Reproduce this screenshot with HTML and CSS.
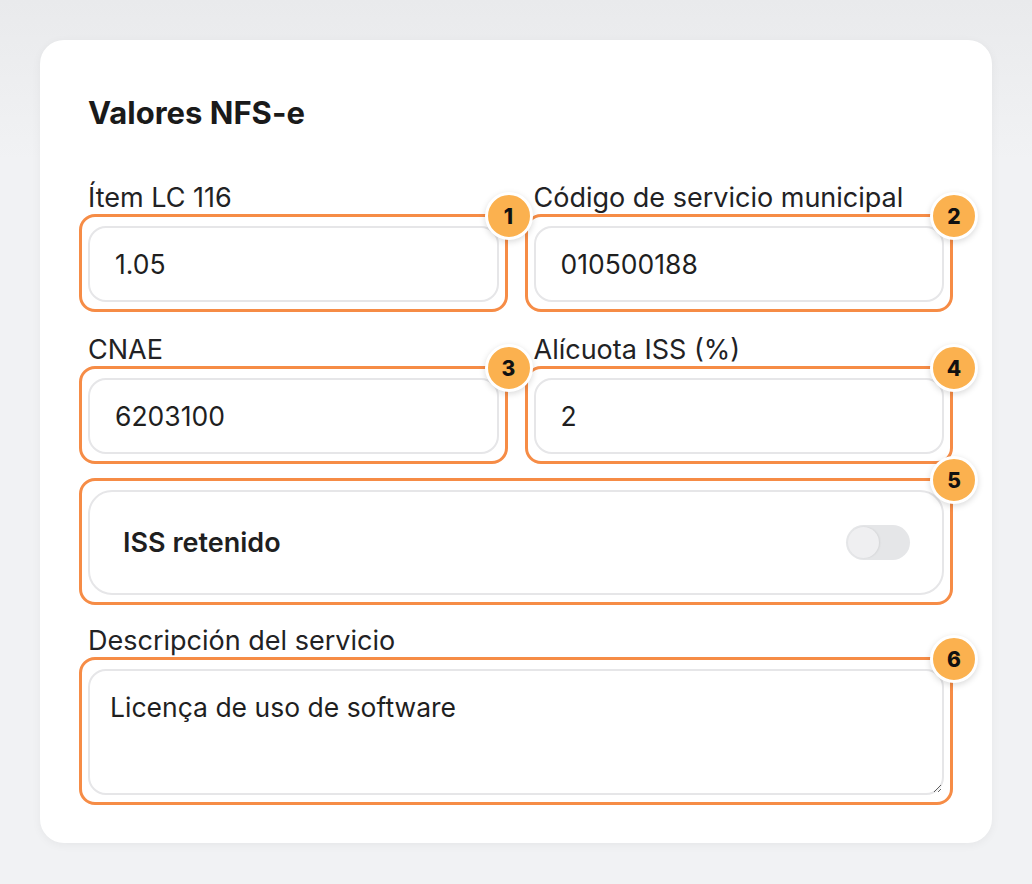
FILE: index.html
```html
<html><head>
<meta charset="UTF-8">
<meta name="viewport" content="width=device-width, initial-scale=1.0">
<title>Valores NFS-e</title>
<link rel="stylesheet" href="styles.css">
</head>
<body>
    <div class="card">
        <h2 class="card-title">Valores NFS-e</h2>

        <div class="form-grid">
            <div class="field">
                <label class="field-label">Ítem LC 116</label>
                <div class="control">
                    <input class="input" type="text" value="1.05">
                    <span class="mark"></span>
                    <span class="badge">1</span>
                </div>
            </div>

            <div class="field">
                <label class="field-label">Código de servicio municipal</label>
                <div class="control">
                    <input class="input" type="text" value="010500188">
                    <span class="mark"></span>
                    <span class="badge">2</span>
                </div>
            </div>

            <div class="field">
                <label class="field-label">CNAE</label>
                <div class="control">
                    <input class="input" type="text" value="6203100">
                    <span class="mark"></span>
                    <span class="badge">3</span>
                </div>
            </div>

            <div class="field">
                <label class="field-label">Alícuota ISS (%)</label>
                <div class="control">
                    <input class="input" type="text" value="2">
                    <span class="mark"></span>
                    <span class="badge">4</span>
                </div>
            </div>

            <!-- toggle row spans both columns -->
            <div class="field full toggle-row">
                <div class="control">
                    <div class="toggle-card">
                        <span class="toggle-label">ISS retenido</span>
                        <span class="switch"><span class="knob"></span></span>
                    </div>
                    <span class="mark"></span>
                    <span class="badge">5</span>
                </div>
            </div>

            <div class="field full">
                <label class="field-label">Descripción del servicio</label>
                <div class="control">
                    <textarea class="input textarea">Licença de uso de software</textarea>
                    <span class="mark"></span>
                    <span class="badge">6</span>
                </div>
            </div>
        </div>
    </div>
</body></html>
```

FILE: styles.css
```css
body {
    font-family: Inter, "Noto Sans", Arial, sans-serif;
    background: linear-gradient(to bottom, #e9eaec, #f1f2f4 160px);
    margin: 0;
    padding: 40px;
    color: #1c1c1e;
}

.card {
    background-color: white;
    border-radius: 24px;
    padding: 55px 48px 48px 48px;
    box-shadow: 0 2px 10px rgba(0, 0, 0, 0.05);
}

.card-title {
    font-size: 31px;
    line-height: 36px;
    font-weight: 700;
    margin: 0 0 51px 0;
    color: #1a1a1a;
}

.form-grid {
    display: grid;
    grid-template-columns: 1fr 1fr;
    column-gap: 35px;
    row-gap: 32px;
}

.field {
    display: flex;
    flex-direction: column;
}

.field.full {
    grid-column: 1 / span 2;
}

.toggle-row {
    margin-top: 4px;
    margin-bottom: -2px;
}

.field-label {
    font-size: 27px;
    line-height: 32px;
    margin-bottom: 12px;
    color: #222224;
}

.control {
    position: relative;
}

.input {
    box-sizing: border-box;
    width: 100%;
    height: 76px;
    border: 2px solid #e6e6e8;
    border-radius: 18px;
    padding: 0 25px;
    font-family: inherit;
    font-size: 26.5px;
    color: #1f1f1f;
    background: white;
    outline: none;
    display: block;
}

.textarea {
    height: 126px;
    padding: 19px 20px;
    line-height: 34px;
    resize: vertical;
}

.toggle-card {
    box-sizing: border-box;
    height: 105px;
    border: 2px solid #e6e6e8;
    border-radius: 24px;
    padding: 0 32px 0 33px;
    display: flex;
    align-items: center;
    justify-content: space-between;
}

.toggle-label {
    font-size: 27px;
    font-weight: 600;
    color: #1f1f1f;
}

.switch {
    width: 64px;
    height: 35px;
    border-radius: 18px;
    background-color: #e5e6e8;
    display: flex;
    align-items: center;
    padding: 0 2px;
    box-sizing: border-box;
}

.knob {
    width: 31px;
    height: 31px;
    border-radius: 50%;
    background-color: #efeff1;
    box-shadow: 1px 0 2px rgba(0, 0, 0, 0.08);
}

/* annotation overlay */
.mark {
    position: absolute;
    top: -12px;
    left: -9px;
    right: -9px;
    bottom: -10px;
    border: 3px solid #f68c46;
    border-radius: 16px;
    pointer-events: none;
}

.badge {
    position: absolute;
    top: -34px;
    right: -34px;
    width: 42px;
    height: 42px;
    border-radius: 50%;
    background-color: #fbb14f;
    border: 3px solid white;
    box-shadow: 0 2px 6px rgba(0, 0, 0, 0.15);
    display: flex;
    justify-content: center;
    align-items: center;
    font-size: 21px;
    font-weight: 800;
    color: #111;
    z-index: 2;
}
```
